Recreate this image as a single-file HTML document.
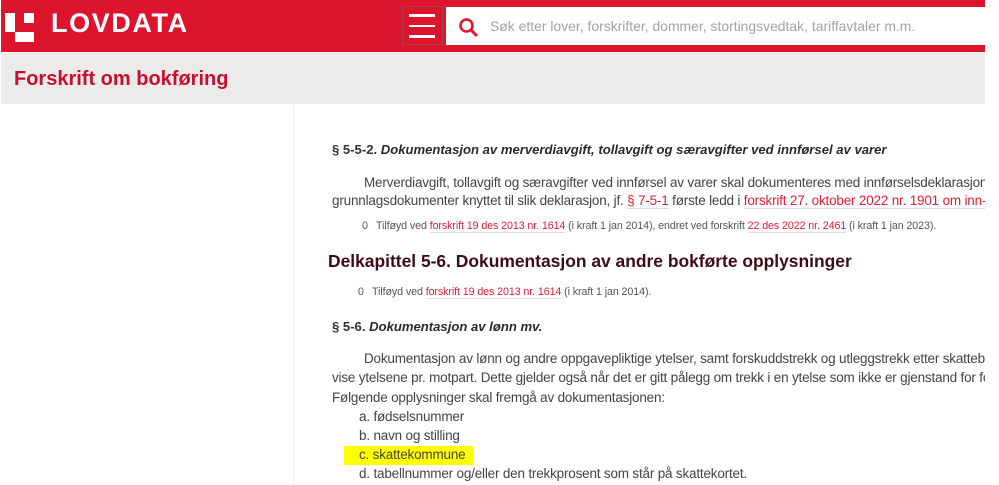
<!DOCTYPE html>
<html lang="no">
<head>
<meta charset="utf-8">
<title>Forskrift om bokføring</title>
<style>
html,body{margin:0;padding:0;background:#fff;}
body{width:999px;height:485px;overflow:hidden;position:relative;font-family:"Liberation Sans",Arial,sans-serif;}
#page{position:absolute;left:1px;top:0;width:984px;height:485px;overflow:hidden;background:#fff;}
.a{position:absolute;white-space:nowrap;}
.t{position:absolute;white-space:nowrap;font-size:13.5px;letter-spacing:-.19px;line-height:19px;color:#444;}
.s{position:absolute;white-space:nowrap;font-size:10.7px;letter-spacing:-.095px;line-height:14px;color:#555;}
a{color:#dc1e37;text-decoration:none;border-bottom:1px solid #ddd;}
.h{position:absolute;white-space:nowrap;font-size:13.1px;line-height:16px;font-weight:bold;color:#333;}
.h i{color:#2a2a2a;}
</style>
</head>
<body>
<div id="page">
  <div class="a" style="left:0;top:0;width:984px;height:52px;background:#dc142c;"></div>
  <div class="a" style="left:4px;top:13px;width:9.5px;height:19px;background:#fff;"></div>
  <div class="a" style="left:23px;top:13px;width:10px;height:10px;background:#fff;"></div>
  <div class="a" style="left:13.5px;top:32px;width:19.5px;height:9.5px;background:#fff;"></div>
  <div class="a" style="left:50px;top:7px;font-size:27px;line-height:32px;font-weight:bold;color:#fff;letter-spacing:1.6px;">LOVDATA</div>

  <div class="a" style="left:401px;top:6px;width:39px;height:37px;border:1px solid #a5404e;"></div>
  <div class="a" style="left:408px;top:14px;width:26px;height:2.5px;background:#fff;"></div>
  <div class="a" style="left:408px;top:24.5px;width:26px;height:2.5px;background:#fff;"></div>
  <div class="a" style="left:408px;top:35px;width:26px;height:2.5px;background:#fff;"></div>

  <div class="a" style="left:445px;top:7px;width:539px;height:38px;background:#fff;"></div>
  <svg class="a" style="left:456px;top:16px;" width="22" height="22" viewBox="0 0 22 22">
    <circle cx="9.5" cy="9.5" r="6" fill="none" stroke="#e8142c" stroke-width="2.6"/>
    <path d="M14 14L19 19" stroke="#e8142c" stroke-width="3" stroke-linecap="round"/>
  </svg>
  <div class="a" style="left:489px;top:17px;font-size:13.93px;line-height:18px;color:#a3a3a3;">Søk etter lover, forskrifter, dommer, stortingsvedtak, tariffavtaler m.m.</div>

  <div class="a" style="left:0;top:53px;width:984px;height:51px;background:#ecebe9;"></div>
  <div class="a" style="left:13px;top:66px;font-size:20px;line-height:27px;font-weight:bold;color:#c8102e;">Forskrift om bokføring</div>
  <div class="a" style="left:292px;top:105px;width:1px;height:380px;background:#efefef;"></div>

  <div class="h" style="left:331px;top:142px;">§ 5-5-2. <i>Dokumentasjon av merverdiavgift, tollavgift og særavgifter ved innførsel av varer</i></div>

  <div class="t" style="left:363px;top:173px;">Merverdiavgift, tollavgift og særavgifter ved innførsel av varer skal dokumenteres med innførselsdeklarasjon</div>
  <div class="t" style="left:331px;top:191px;">grunnlagsdokumenter knyttet til slik deklarasjon, jf. <a href="#">§ 7-5-1</a> første ledd i <a href="#">forskrift 27. oktober 2022 nr. 1901 om inn-</a></div>

  <div class="s" style="left:361px;top:219px;">0</div>
  <div class="s" style="left:375px;top:219px;">Tilføyd ved <a href="#">forskrift 19 des 2013 nr. 1614</a> (i kraft 1 jan 2014), endret ved forskrift <a href="#">22 des 2022 nr. 2461</a> (i kraft 1 jan 2023).</div>

  <div class="a" style="left:327px;top:250px;font-size:17.43px;line-height:22px;font-weight:bold;color:#3d0c14;">Delkapittel 5-6. Dokumentasjon av andre bokførte opplysninger</div>

  <div class="s" style="left:357px;top:285px;">0</div>
  <div class="s" style="left:371px;top:285px;">Tilføyd ved <a href="#">forskrift 19 des 2013 nr. 1614</a> (i kraft 1 jan 2014).</div>

  <div class="h" style="left:331px;top:319px;">§ 5-6. <i>Dokumentasjon av lønn mv.</i></div>

  <div class="t" style="left:363px;top:349px;">Dokumentasjon av lønn og andre oppgavepliktige ytelser, samt forskuddstrekk og utleggstrekk etter skattebe</div>
  <div class="t" style="left:331px;top:368px;">vise ytelsene pr. motpart. Dette gjelder også når det er gitt pålegg om trekk i en ytelse som ikke er gjenstand for fo</div>
  <div class="t" style="left:331px;top:388px;">Følgende opplysninger skal fremgå av dokumentasjonen:</div>

  <div class="t" style="left:358px;top:407px;">a. fødselsnummer</div>
  <div class="t" style="left:358px;top:426px;">b. navn og stilling</div>
  <div class="a" style="left:343px;top:446px;width:129px;height:19px;background:#ffff00;"></div>
  <div class="t" style="left:358px;top:445px;">c. skattekommune</div>
  <div class="t" style="left:358px;top:464px;">d. tabellnummer og/eller den trekkprosent som står på skattekortet.</div>
</div>
</body>
</html>
